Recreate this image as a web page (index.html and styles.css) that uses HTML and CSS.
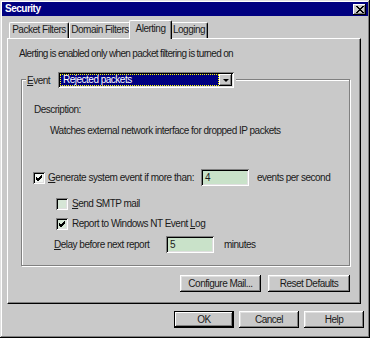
FILE: index.html
```html
<!DOCTYPE html>
<html lang="en">
<head>
    <meta charset="UTF-8">
    <title>Security</title>
    <link rel="stylesheet" href="styles.css">
</head>
<body>
    <div class="window">
        <div class="titlebar">
            <span class="title">Security</span>
            <span class="close">
                <svg width="8" height="7" viewBox="0 0 8 7"><path d="M0 0L7 7M1 0L8 7M7 0L0 7M8 0L1 7" stroke="#000" stroke-width="1"/></svg>
            </span>
        </div>

        <div class="tabs">
            <div class="tab tab-packet">Packet Filters</div>
            <div class="tab tab-domain">Domain Filters</div>
            <div class="tab tab-alert active">Alerting</div>
            <div class="tab tab-log">Logging</div>
        </div>

        <div class="panel">
            <p class="intro">Alerting is enabled only when packet filtering is turned on</p>

            <div class="group">
                <div class="group-head">
                    <span class="event-label"><u>E</u>vent</span>
                    <span class="combo">
                        <span class="combo-field">Rejected packets</span>
                        <span class="combo-btn"><span class="arrow"></span></span>
                    </span>
                </div>

                <div class="desc-label">Description:</div>
                <div class="desc">Watches external network interface for dropped IP packets</div>

                <div class="row row-gen">
                    <span class="check checked"><svg width="8" height="8" viewBox="0 0 8 8"><path d="M1 3L3 5L7 1M1 4L3 6L7 2M1 5L3 7L7 3" stroke="#000" fill="none"/></svg></span>
                    <span class="gen-label"><u>G</u>enerate system event if more than:</span>
                    <span class="field">4</span>
                    <span class="unit">events per second</span>
                </div>

                <div class="row row-sub row-smtp">
                    <span class="check"></span>
                    <span><u>S</u>end SMTP mail</span>
                </div>

                <div class="row row-sub row-report">
                    <span class="check checked"><svg width="8" height="8" viewBox="0 0 8 8"><path d="M1 3L3 5L7 1M1 4L3 6L7 2M1 5L3 7L7 3" stroke="#000" fill="none"/></svg></span>
                    <span>Report to Windows NT Event <u>L</u>og</span>
                </div>

                <div class="row row-delay">
                    <span class="delay-label"><u>D</u>elay before next report</span>
                    <span class="field">5</span>
                    <span class="unit unit-min">minutes</span>
                </div>
            </div>

            <div class="panel-buttons">
                <button class="btn btn-mail">Configure Mail...</button>
                <button class="btn btn-reset">Reset Defaults</button>
            </div>
        </div>

        <div class="dialog-buttons">
            <button class="btn btn-dlg default">OK</button>
            <button class="btn btn-dlg">Cancel</button>
            <button class="btn btn-dlg">Help</button>
        </div>
    </div>
</body>
</html>
```

FILE: styles.css
```css
body {
    margin: 0;
    background: #c9c9c9;
    font-family: "Liberation Sans", Arial, sans-serif;
    font-size: 10px;
    letter-spacing: -0.5px;
    color: #1a1a1a;
}
.window {
    width: 370px;
    height: 338px;
    box-sizing: border-box;
    padding: 2px;
    background: #c9c9c9;
    box-shadow: inset -1px -1px #000, inset 1px 1px #e0e0e0, inset -2px -2px #808080, inset 2px 2px #fff;
}
.titlebar {
    height: 14px;
    background: #000080;
    display: flex;
    align-items: center;
    justify-content: space-between;
}
.title {
    color: #fff;
    font-weight: bold;
    padding-left: 3px;
    line-height: 14px;
}
.close {
    width: 13px;
    height: 11px;
    margin-right: 2px;
    background: #c9c9c9;
    box-shadow: inset -1px -1px #000, inset 1px 1px #fff, inset -2px -2px #808080;
    display: flex;
    align-items: center;
    justify-content: center;
}

/* tabs */
.tabs {
    display: flex;
    align-items: flex-end;
    height: 18px;
    margin-top: 4px;
    padding-left: 7px;
}
.tab {
    height: 16px;
    box-sizing: border-box;
    line-height: 14px;
    text-align: center;
    border-top: 1px solid #fff;
    border-left: 1px solid #fff;
    border-right: 1px solid #000;
    border-radius: 2px 2px 0 0;
    box-shadow: inset -1px 0 #808080;
    background: #c9c9c9;
}
.tab-packet { width: 60px; }
.tab-domain { width: 62px; }
.tab-alert { width: 39px; }
.tab-log { width: 38px; }
.tab.active {
    height: 19px;
    width: 43px;
    margin: 0 -2px -1px;
    position: relative;
    z-index: 1;
    line-height: 15px;
}

.panel {
    width: 354px;
    height: 266px;
    margin-left: 5px;
    box-sizing: border-box;
    border: 1px solid;
    border-color: #fff #000 #000 #fff;
    box-shadow: inset -1px -1px #808080;
    padding: 8px 10px 0 11px;
}
.intro {
    margin: 0;
    line-height: 13px;
    letter-spacing: -0.65px;
}

/* event group */
.group {
    margin: 19px 0 0 2px;
    border: 1px solid #808080;
    box-shadow: inset 1px 1px #fff, 1px 1px #fff;
    padding: 0 0 12px 11px;
}
.group-head {
    display: flex;
    align-items: center;
    width: fit-content;
    height: 16px;
    margin: -8px 0 0 -7px;
    padding: 0 2px 0 1px;
    background: #c9c9c9;
}
.event-label {
    width: 31px;
}
.combo {
    width: 176px;
    height: 16px;
    box-sizing: border-box;
    padding: 2px;
    display: flex;
    background: #fff;
    box-shadow: inset 1px 1px #808080, inset -1px -1px #fff, inset 2px 2px #000, inset -2px -2px #dfdfdf;
}
.combo-field {
    flex: 1;
    background: #000080;
    color: #fff;
    border: 1px dotted #ff0;
    line-height: 10px;
    padding-left: 2px;
}
.combo-btn {
    width: 13px;
    background: #c9c9c9;
    box-shadow: inset -1px -1px #000, inset 1px 1px #fff, inset -2px -2px #808080;
    display: flex;
    align-items: center;
    justify-content: center;
}
.arrow {
    width: 0;
    height: 0;
    border-left: 3px solid transparent;
    border-right: 3px solid transparent;
    border-top: 3px solid #000;
}
.desc-label {
    margin: 15px 0 0 1px;
    line-height: 13px;
}
.desc {
    margin: 8px 0 0 17px;
    line-height: 13px;
}

.row {
    display: flex;
    align-items: center;
    white-space: nowrap;
}
.row-gen {
    margin-top: 32px;
    height: 17px;
}
.row-sub {
    height: 13px;
    padding-left: 23px;
}
.row-smtp { margin-top: 11px; }
.row-report { margin-top: 7px; }
.row-delay {
    margin-top: 6px;
    height: 17px;
    padding-left: 21px;
}
.check {
    width: 12px;
    height: 12px;
    box-sizing: border-box;
    margin-right: 3px;
    background: #d6e6d6;
    box-shadow: inset 1px 1px #808080, inset -1px -1px #fff, inset 2px 2px #000, inset -2px -2px #dfdfdf;
    display: flex;
    align-items: center;
    justify-content: center;
}
.row-gen .check { background: #f4f8f4; }
.row-sub .check { margin-right: 4px; }
.gen-label {
    width: 153px;
    flex-shrink: 0;
    letter-spacing: -0.45px;
}
.delay-label {
    width: 112px;
    flex-shrink: 0;
}
.field {
    width: 48px;
    height: 17px;
    flex-shrink: 0;
    box-sizing: border-box;
    padding: 2px 0 0 4px;
    line-height: 13px;
    background: #c9e2c9;
    box-shadow: inset 1px 1px #808080, inset -1px -1px #fff, inset 2px 2px #000, inset -2px -2px #dfdfdf;
}
.unit {
    margin-left: 8px;
}
.unit-min { margin-left: 10px; }

/* buttons */
.btn {
    font-family: "Liberation Sans", Arial, sans-serif;
    font-size: 10px;
    letter-spacing: -0.5px;
    color: #1a1a1a;
    height: 17px;
    padding: 0;
    border: none;
    background: #c9c9c9;
    box-shadow: inset -1px -1px #000, inset 1px 1px #fff, inset -2px -2px #808080, inset 2px 2px #dfdfdf;
}
.panel-buttons {
    display: flex;
    justify-content: flex-end;
    gap: 7px;
    margin-top: 9px;
}
.btn-mail { width: 81px; }
.btn-reset { width: 82px; }
.dialog-buttons {
    display: flex;
    justify-content: flex-end;
    gap: 5px;
    margin: 7px 4px 0 0;
}
.btn-dlg { width: 60px; }
.btn.default {
    box-shadow: inset 0 0 0 1px #000, inset -2px -2px #000, inset 2px 2px #fff, inset -3px -3px #808080;
}
```
